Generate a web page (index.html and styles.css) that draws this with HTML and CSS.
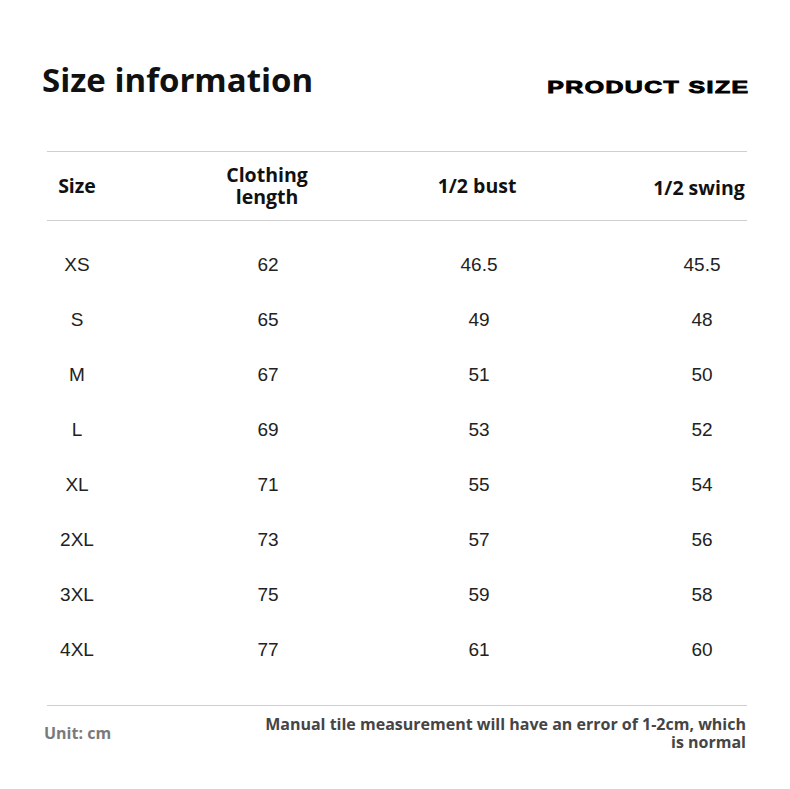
FILE: index.html
```html
<!DOCTYPE html>
<html>
<head>
<meta charset="utf-8">
<link rel="stylesheet" href="styles.css">
</head>
<body>
<div class="page">
  <header class="top">
    <h1 class="title">Size information</h1>
    <div class="brand"><span class="brand-text">PRODUCT SIZE</span></div>
  </header>
  <div class="table">
    <div class="row head">
      <div class="c c1">Size</div>
      <div class="c c2">Clothing<br>length</div>
      <div class="c c3">1/2 bust</div>
      <div class="c c4">1/2 swing</div>
    </div>
    <div class="body">
      <div class="row"><div class="c c1">XS</div><div class="c c2">62</div><div class="c c3">46.5</div><div class="c c4">45.5</div></div>
      <div class="row"><div class="c c1">S</div><div class="c c2">65</div><div class="c c3">49</div><div class="c c4">48</div></div>
      <div class="row"><div class="c c1">M</div><div class="c c2">67</div><div class="c c3">51</div><div class="c c4">50</div></div>
      <div class="row"><div class="c c1">L</div><div class="c c2">69</div><div class="c c3">53</div><div class="c c4">52</div></div>
      <div class="row"><div class="c c1">XL</div><div class="c c2">71</div><div class="c c3">55</div><div class="c c4">54</div></div>
      <div class="row"><div class="c c1">2XL</div><div class="c c2">73</div><div class="c c3">57</div><div class="c c4">56</div></div>
      <div class="row"><div class="c c1">3XL</div><div class="c c2">75</div><div class="c c3">59</div><div class="c c4">58</div></div>
      <div class="row"><div class="c c1">4XL</div><div class="c c2">77</div><div class="c c3">61</div><div class="c c4">60</div></div>
    </div>
  </div>
  <footer class="foot">
    <div class="unit">Unit: cm</div>
    <div class="note">Manual tile measurement will have an error of 1-2cm, which<br>is normal</div>
  </footer>
</div>
</body>
</html>
```
FILE: styles.css
```css
html, body {
  margin: 0;
  padding: 0;
  background: #ffffff;
}
.page {
  width: 790px;
  height: 789px;
  box-sizing: border-box;
  padding: 58px 42px 0 42px;
  font-family: "Open Sans", "Noto Sans", sans-serif;
  color: #111;
}
.top {
  display: flex;
  justify-content: space-between;
  align-items: center;
  height: 44px;
}
.title {
  margin: 0;
  font-size: 33px;
  font-weight: 700;
  line-height: 44px;
  color: #111;
}
.brand {
  padding-top: 14px;
  margin-right: -2px;
}
.brand-text {
  display: inline-block;
  font-family: "Liberation Sans", Arial, sans-serif;
  font-weight: 700;
  font-size: 17px;
  letter-spacing: 1px;
  -webkit-text-stroke: 0.9px #000;
  transform: scale(1.46, 1);
  transform-origin: right center;
  color: #000;
}
.table {
  margin: 49px 1px 0 5px;
}
.row {
  display: grid;
  grid-template-columns: 60px 320px 100px 1fr;
  align-items: center;
  height: 55px;
}
.head {
  height: 68px;
  border-top: 1px solid #cfcfcf;
  border-bottom: 1px solid #cfcfcf;
  font-weight: 700;
  font-size: 19.5px;
  line-height: 22px;
  color: #111;
}
.head .c4 {
  padding-top: 3px;
  width: 96px;
}
.body {
  padding: 16px 0 28px;
  border-bottom: 1px solid #cfcfcf;
  font-family: "Liberation Sans", Arial, sans-serif;
  font-size: 19px;
  color: #222;
}
.c {
  text-align: center;
  justify-self: center;
  white-space: nowrap;
}
.body .c2 { padding-left: 2px; }
.body .c3 { padding-left: 4px; }
.c4 {
  justify-self: end;
  width: 90px;
}
.foot {
  display: flex;
  justify-content: space-between;
  align-items: flex-start;
  margin: 9px 2px 0 2px;
  font-weight: 700;
  font-size: 16px;
  line-height: 18px;
}
.unit {
  color: #7a7a7a;
  padding-top: 9px;
}
.note {
  color: #454545;
  text-align: right;
}
```
